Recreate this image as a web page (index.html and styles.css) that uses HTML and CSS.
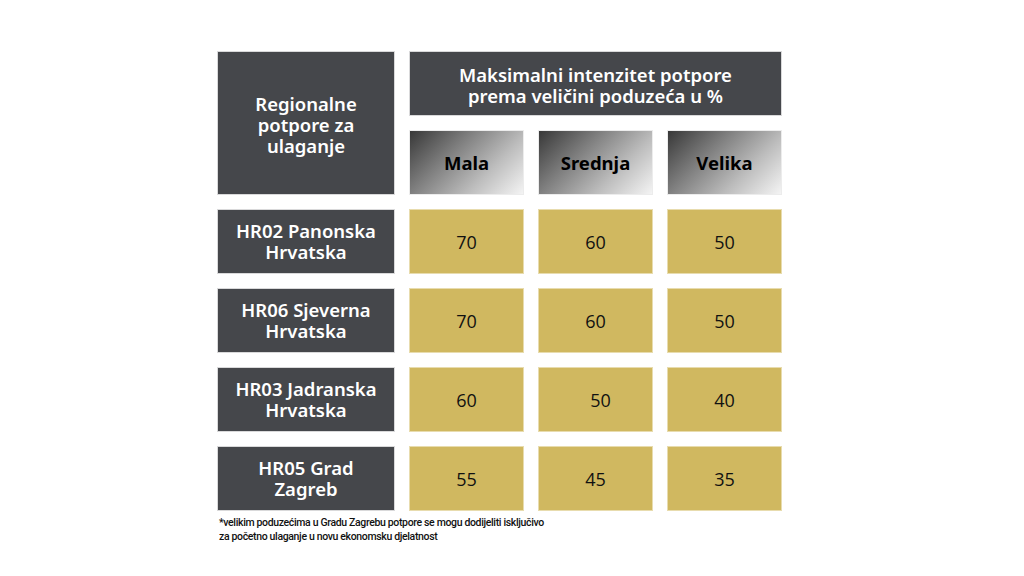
FILE: index.html
```html
<!DOCTYPE html>
<html lang="hr">
<head>
<meta charset="utf-8">
<title>Regionalne potpore</title>
<link rel="stylesheet" href="styles.css">
</head>
<body>
<div class="page">
  <div class="table">
    <div class="cell dark corner">Regionalne<br>potpore za<br>ulaganje</div>
    <div class="cell dark span3">Maksimalni intenzitet potpore<br>prema veličini poduzeća u %</div>
    <div class="cell grad">Mala</div>
    <div class="cell grad">Srednja</div>
    <div class="cell grad">Velika</div>

    <div class="cell dark region">HR02 Panonska<br>Hrvatska</div>
    <div class="cell gold">70</div>
    <div class="cell gold">60</div>
    <div class="cell gold">50</div>

    <div class="cell dark region">HR06 Sjeverna<br>Hrvatska</div>
    <div class="cell gold">70</div>
    <div class="cell gold">60</div>
    <div class="cell gold">50</div>

    <div class="cell dark region">HR03 Jadranska<br>Hrvatska</div>
    <div class="cell gold">60</div>
    <div class="cell gold shift">50</div>
    <div class="cell gold">40</div>

    <div class="cell dark region">HR05 Grad<br>Zagreb</div>
    <div class="cell gold">55</div>
    <div class="cell gold">45</div>
    <div class="cell gold">35</div>
  </div>
  <p class="note">*velikim poduzećima u Gradu Zagrebu potpore se mogu dodijeliti isključivo<br>za početno ulaganje u novu ekonomsku djelatnost</p>
</div>
</body>
</html>
```

FILE: styles.css
```css
html, body {
  margin: 0;
  padding: 0;
  background: #ffffff;
}
.page {
  width: 1024px;
  height: 576px;
  padding: 51px 0 0 217px;
  box-sizing: border-box;
}
.table {
  display: grid;
  grid-template-columns: 178px 115px 115px 115px;
  grid-auto-rows: 65px;
  column-gap: 14px;
  row-gap: 14px;
}
.cell {
  display: flex;
  align-items: center;
  justify-content: center;
  text-align: center;
  box-sizing: border-box;
}
.dark {
  background: #45474b;
  color: #ffffff;
  font-family: "Noto Sans", sans-serif;
  font-weight: 600;
  font-size: 18.5px;
  line-height: 21px;
  border: 1px solid #d9d9da;
}
.corner {
  grid-row: span 2;
  padding-top: 2px;
}
.span3 {
  grid-column: span 3;
  padding-top: 2px;
}
.region {
  padding-bottom: 2px;
}
.grad {
  background: linear-gradient(135deg, #383838 0%, #7e7e7e 35%, #bdbdbd 68%, #f4f4f4 100%);
  color: #000000;
  font-family: "Noto Sans", sans-serif;
  font-weight: 700;
  font-size: 18.5px;
  border: 1px solid #ececec;
}
.gold {
  background: #d0b860;
  color: #111111;
  font-family: "Open Sans", sans-serif;
  font-size: 18px;
  border: 1px solid #e8dcae;
}
.shift {
  padding-left: 10px;
}
.note {
  margin: 5px 0 0 2px;
  font-family: Roboto, sans-serif;
  font-size: 10.5px;
  font-weight: 500;
  letter-spacing: -0.35px;
  line-height: 14px;
  color: #111111;
}
```
